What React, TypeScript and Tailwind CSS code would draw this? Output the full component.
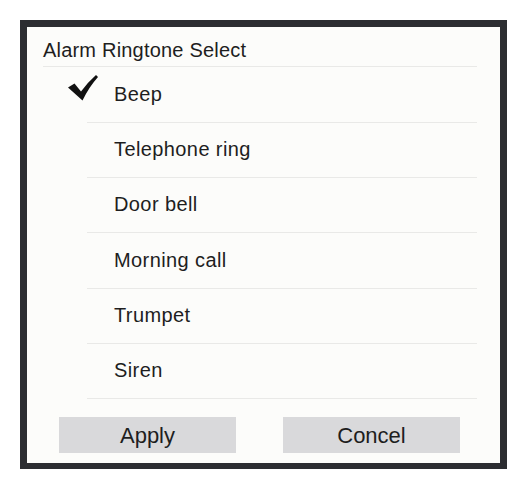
import React, { useState } from 'react';

const tones = ['Beep', 'Telephone ring', 'Door bell', 'Morning call', 'Trumpet', 'Siren'];
const rowHeights = ['h-[56px]', 'h-[55px]', 'h-[55px]', 'h-[56px]', 'h-[55px]', 'h-[55px]'];

const CheckMark = () => (
  <svg width="30" height="26" viewBox="0 0 30 26" className="block">
    <path d="M0 12.5 L6.5 8.5 L13 16.5 Q20 7 28 0 L30 2 Q21 12 14.5 25.5 Z" fill="#111" />
  </svg>
);

const App: React.FC = () => {
  const [selected, setSelected] = useState(0);

  return (
    <div
      className="w-[527px] h-[490px] bg-white pt-5 pl-5"
      style={{ fontFamily: '"Liberation Sans", Arial, sans-serif' }}
    >
      <div className="w-[487px] h-[449px] border-[7px] border-b-[6px] border-[#2c2d31] bg-[#fcfcfa] flex flex-col text-[#1e1e1e]">
        {/* Title */}
        <div className="h-[40px] ml-4 mr-[23px] border-b border-[#e9e9e7] flex items-center text-[20px] tracking-[0.2px] pt-[6px]">
          Alarm Ringtone Select
        </div>

        {/* Ringtone list */}
        <div className="flex flex-col">
          {tones.map((tone, i) => (
            <button
              key={tone}
              onClick={() => setSelected(i)}
              className={`${rowHeights[i]} relative flex items-center ml-[60px] mr-[23px] border-b border-[#e9e9e7] text-left text-[20px] tracking-[0.4px]`}
            >
              {selected === i && (
                <span className="absolute left-[-19px] top-[8px]">
                  <CheckMark />
                </span>
              )}
              <span className="pl-[27px] pb-[2px]">{tone}</span>
            </button>
          ))}
        </div>

        {/* Buttons */}
        <div className="flex gap-[47px] pl-8 mt-[18px]">
          <button className="w-[177px] h-[36px] bg-[#d9d9db] text-[22px] flex items-center justify-center">
            Apply
          </button>
          <button className="w-[177px] h-[36px] bg-[#d9d9db] text-[22px] flex items-center justify-center">
            Concel
          </button>
        </div>
      </div>
    </div>
  );
};

export default App;
